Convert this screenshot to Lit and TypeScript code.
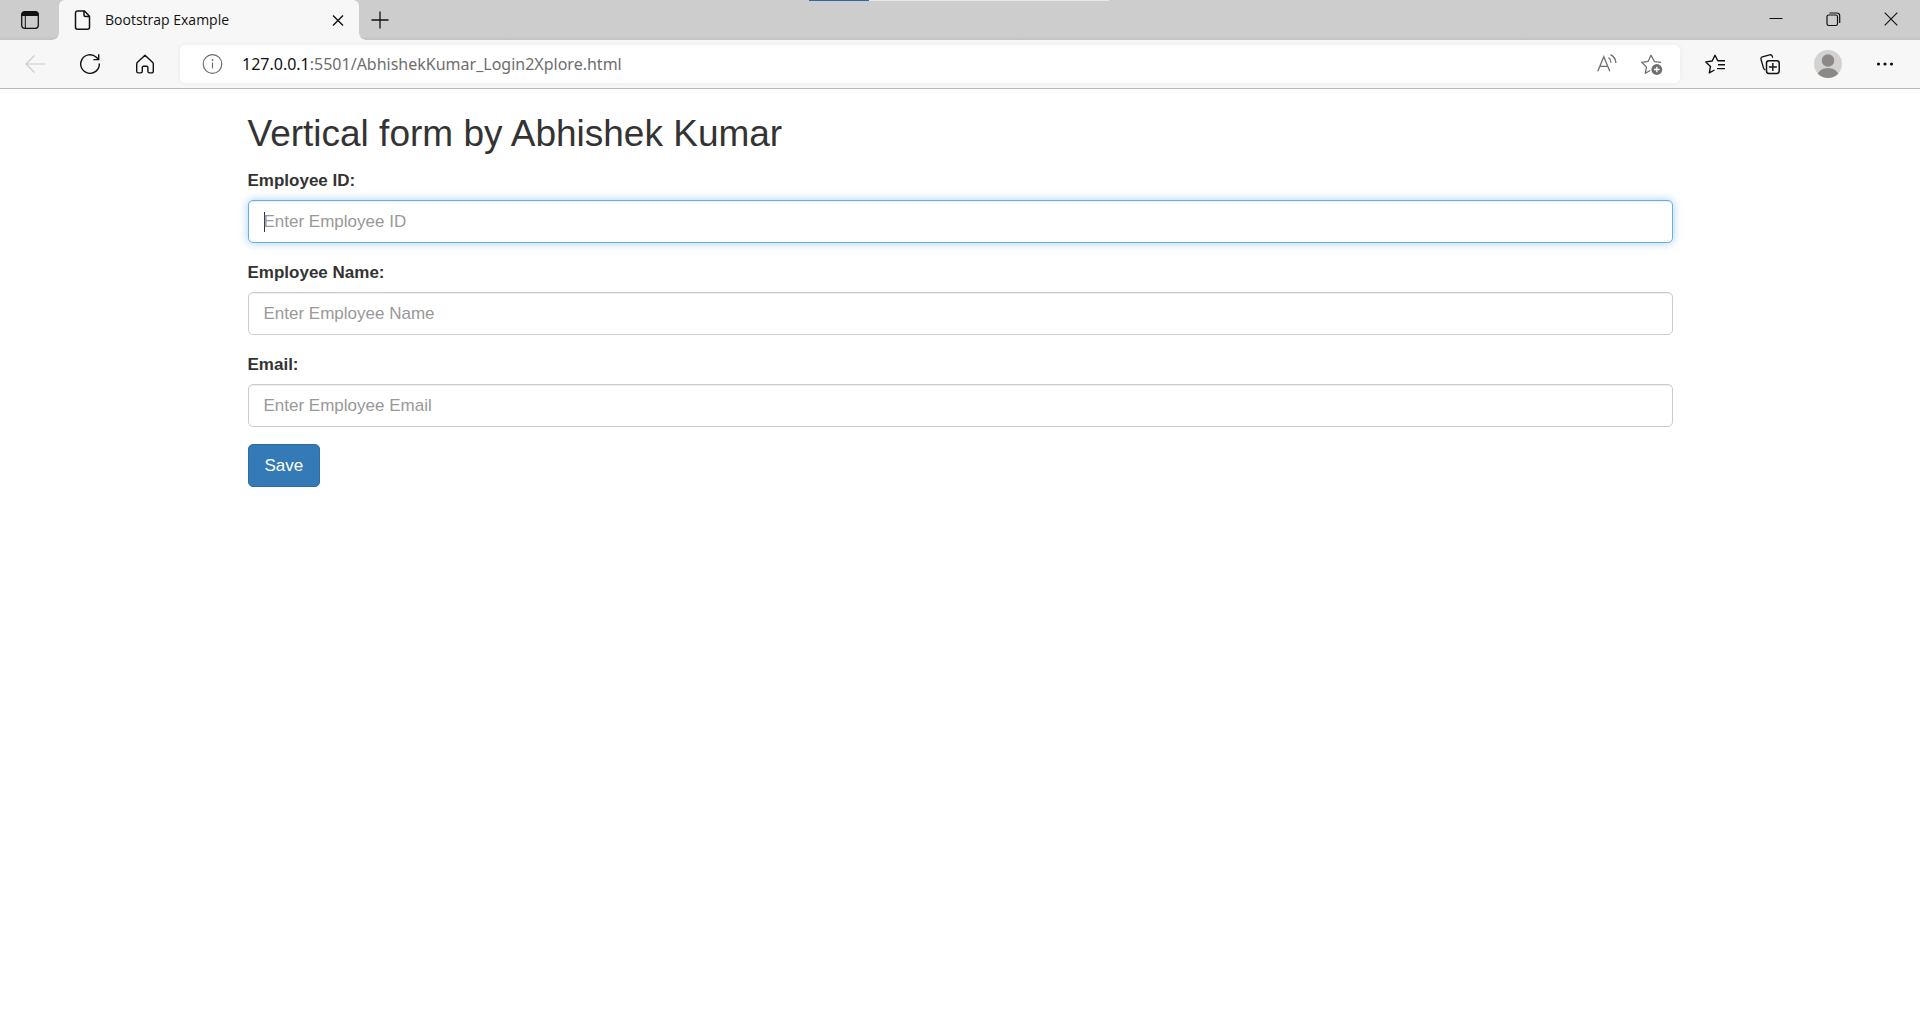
import { LitElement, html, svg, css } from "lit";
import { customElement, property, state } from "lit/decorators.js";

const icons = {
  tabActions: svg`<rect x="1.700" y="1.700" width="16.600" height="16.600" rx="3" fill="none" stroke="currentColor" stroke-width="1.300"/><path d="M1.500 6V4.500a3 3 0 0 1 3-3h11a3 3 0 0 1 3 3V6z" fill="currentColor"/><path d="M5.300 6v12" stroke="currentColor" stroke-width="1"/>`,
  page: svg`<path d="M4.500 1h7l5 5.200v11a2 2 0 0 1-2 2h-10a2 2 0 0 1-2-2V3a2 2 0 0 1 2-2z M11 1.200V5a1.500 1.500 0 0 0 1.500 1.500h4" fill="none" stroke="currentColor" stroke-width="1.500" stroke-linejoin="round"/>`,
  close: svg`<path d="M5 5.500l10 10M15 5.500l-10 10" fill="none" stroke="currentColor" stroke-width="1.400"/>`,
  plus: svg`<path d="M10 1.500v17M1.500 10h17" fill="none" stroke="currentColor" stroke-width="1.300"/>`,
  back: svg`<path d="M20 10H1M9.500 1.500L1 10l8.500 8.500" fill="none" stroke="currentColor" stroke-width="1.200"/>`,
  refresh: svg`<path d="M19.300 9.500A9.300 9.300 0 1 1 16.300 3.200L18.700 5.500M18.700 .3V5.600H13.400" fill="none" stroke="currentColor" stroke-width="1.400"/>`,
  home: svg`<path d="M2.500 8.300L10 1.200l7.500 7.100c.5.500.8 1.100.8 1.800v7.200a1.600 1.600 0 0 1-1.600 1.600h-2.200a1.600 1.600 0 0 1-1.600-1.600v-3.800a1.200 1.200 0 0 0-1.200-1.200H8.500a1.200 1.200 0 0 0-1.200 1.200v3.800a1.600 1.600 0 0 1-1.600 1.600H3.300a1.600 1.600 0 0 1-1.600-1.600v-7.200c0-.7.300-1.300.8-1.800z" fill="none" stroke="currentColor" stroke-width="1.400" stroke-linejoin="round"/>`,
  info: svg`<circle cx="10.500" cy="10" r="9.300" fill="none" stroke="currentColor" stroke-width="1.200"/><path d="M10.500 8.500v6" stroke="currentColor" stroke-width="1.200"/><circle cx="10.500" cy="6" r=".9" fill="currentColor"/>`,
  readAloud: svg`<path d="M.8 17.300L6.800 2.700l6 14.600M2.800 12.300h8M11.500 3.500c1.600 1.100 2.500 2.800 2.500 5.200M13.500.6c3.300 1.700 5.200 4.400 5.400 8.400" fill="none" stroke="currentColor" stroke-width="1.300"/>`,
  starAdd: svg`<path d="M20 8.300l-6.500-.7L10 1.200 7.200 7.300l-6.500 1 4.800 4.800-1.200 6.200 5-2.800" fill="none" stroke="currentColor" stroke-width="1.300" stroke-linejoin="round"/><circle cx="15.800" cy="15.500" r="5.400" fill="currentColor"/><path d="M15.800 12.700v5.600M13 15.500h5.600" stroke="#fff" stroke-width="1.300"/>`,
  favorites: svg`<path d="M14 6.800H12.800L10 1.200 7.200 7 .8 7.900l4.700 4.500-1.200 6.400 5.200-2.800M12.500 6.800H20M13 10.700h7M12 14.600h8" fill="none" stroke="currentColor" stroke-width="1.400" stroke-linejoin="round"/>`,
  collections: svg`<path d="M5.300 15.800a3 3 0 0 1-1.700-1.600L1 5.500a2 2 0 0 1 1.300-2.600L9.600.9a2.200 2.200 0 0 1 2.700 1.500l.4 1.300" fill="none" stroke="currentColor" stroke-width="1.300"/><rect x="6.500" y="6.700" width="12.700" height="12.700" rx="2.400" fill="none" stroke="currentColor" stroke-width="1.500"/><path d="M12.850 9v8M8.850 13h8" stroke="currentColor" stroke-width="1.400"/>`,
  more: svg`<circle cx="2.500" cy="10" r="1.600" fill="currentColor"/><circle cx="9" cy="10" r="1.600" fill="currentColor"/><circle cx="15.500" cy="10" r="1.600" fill="currentColor"/>`,
  minimize: svg`<path d="M4.500 9.500h13" stroke="currentColor" stroke-width="1"/>`,
  restore: svg`<rect x="4" y="6" width="10.500" height="10.500" rx="1.700" fill="none" stroke="currentColor" stroke-width="1.200"/><path d="M6.500 4H14a2.700 2.700 0 0 1 2.700 2.700V14" fill="none" stroke="currentColor" stroke-width="1.200"/>`,
  closeWindow: svg`<path d="M3.700 3.700l12.600 12.600M16.300 3.700L3.700 16.300" stroke="currentColor" stroke-width="1.100"/>`,
};

type IconName = keyof typeof icons;

@customElement("line-icon")
class LineIcon extends LitElement {
  static styles = css`
    :host { display: block; width: 20px; height: 20px; }
    .glyph { display: block; width: 20px; height: 20px; overflow: visible; }
  `;
  @property() name: IconName = "page";
  render() {
    return html`<svg class="glyph" viewBox="0 0 20 20" aria-hidden="true">${icons[this.name]}</svg>`;
  }
}

@customElement("browser-chrome")
class BrowserChrome extends LitElement {
  static styles = css`
    :host { display: block; font-family: "Open Sans", "Noto Sans", sans-serif; color: #111; }
    button { appearance: none; border: 0; margin: 0; padding: 0; background: none; color: inherit; display: flex; align-items: center; justify-content: center; flex: none; }
    .strip { position: relative; display: flex; height: 40px; background: linear-gradient(#cdcdcd 36px, #c2c2c2 40px); }
    .actions { width: 59px; }
    .tab { position: relative; width: 300px; display: flex; align-items: center; background: #f7f7f7; border-radius: 6px 6px 0 0; padding: 0 5px 0 14px; gap: 12px; box-sizing: border-box; }
    .tab::before, .tab::after { content: ""; position: absolute; bottom: 0; width: 6px; height: 6px; }
    .tab::before { left: -6px; background: radial-gradient(circle at 0 0, transparent 5px, #f7f7f7 6px); }
    .tab::after { right: -6px; background: radial-gradient(circle at 100% 0, transparent 5px, #f7f7f7 6px); }
    .title { flex: 1; font-size: 14px; line-height: 20px; white-space: nowrap; }
    .tab-close { width: 32px; height: 32px; }
    .new-tab { width: 42px; }
    .controls { margin-left: auto; display: flex; }
    .control { width: 58px; height: 38px; }
    .progress { position: absolute; top: 0; left: 50%; width: 300px; height: 1px; margin-left: -151px; background: linear-gradient(90deg, #2a6aa8 60px, #e8e8e8 60px); }
    .toolbar { display: flex; align-items: center; gap: 15px; height: 48px; padding: 0 14px 0 15px; background: #f7f7f7; border-bottom: 1px solid #b8b8b8; }
    .tool { width: 40px; height: 40px; }
    .tool:disabled { color: #ccc; }
    .profile { width: 46px; }
    .avatar { display: block; width: 28px; height: 28px; }
    .address { flex: 1; min-width: 0; display: flex; align-items: center; gap: 4px; height: 38px; box-sizing: border-box; padding: 0 9px 0 22px; background: #fff; border-radius: 5px; box-shadow: 0 0 4px #e8e8e8; color: #6e6e6e; }
    .url { flex: 1; min-width: 0; padding-left: 16px; font-family: "Noto Sans", "Open Sans", sans-serif; font-size: 16px; line-height: 24px; white-space: nowrap; overflow: hidden; }
    .host { color: #111; }
  `;
  render() {
    return html`
      <div class="strip">
        <button class="actions" aria-label="Tab actions"><line-icon name="tabActions"></line-icon></button>
        <div class="tab">
          <line-icon name="page"></line-icon>
          <span class="title">Bootstrap Example</span>
          <button class="tab-close" aria-label="Close tab"><line-icon name="close"></line-icon></button>
        </div>
        <button class="new-tab" aria-label="New tab"><line-icon name="plus"></line-icon></button>
        <div class="progress"></div>
        <div class="controls">
          <button class="control" aria-label="Minimize"><line-icon name="minimize"></line-icon></button>
          <button class="control" aria-label="Restore"><line-icon name="restore"></line-icon></button>
          <button class="control" aria-label="Close"><line-icon name="closeWindow"></line-icon></button>
        </div>
      </div>
      <div class="toolbar">
        <button class="tool" disabled aria-label="Back"><line-icon name="back"></line-icon></button>
        <button class="tool" aria-label="Refresh"><line-icon name="refresh"></line-icon></button>
        <button class="tool" aria-label="Home"><line-icon name="home"></line-icon></button>
        <div class="address">
          <line-icon name="info"></line-icon>
          <span class="url"><span class="host">127.0.0.1</span>:5501/AbhishekKumar_Login2Xplore.html</span>
          <button class="tool" aria-label="Read aloud"><line-icon name="readAloud"></line-icon></button>
          <button class="tool" aria-label="Add to favorites"><line-icon name="starAdd"></line-icon></button>
        </div>
        <button class="tool" aria-label="Favorites"><line-icon name="favorites"></line-icon></button>
        <button class="tool" aria-label="Collections"><line-icon name="collections"></line-icon></button>
        <button class="tool profile" aria-label="Profile">
          <svg class="avatar" viewBox="0 0 28 28" aria-hidden="true">
            <defs><clipPath id="disc"><circle cx="14" cy="14" r="14" /></clipPath></defs>
            <circle cx="14" cy="14" r="14" fill="#d4d2d0" />
            <g clip-path="url(#disc)" fill="#8b8886"><circle cx="14" cy="10.500" r="6.200" /><ellipse cx="14" cy="26" rx="10.500" ry="8" /></g>
          </svg>
        </button>
        <button class="tool" aria-label="Settings and more"><line-icon name="more"></line-icon></button>
      </div>
    `;
  }
}

interface Field { id: string; label: string; placeholder: string; type: string; }

const fields: Field[] = [
  { id: "empid", label: "Employee ID:", placeholder: "Enter Employee ID", type: "text" },
  { id: "empname", label: "Employee Name:", placeholder: "Enter Employee Name", type: "text" },
  { id: "email", label: "Email:", placeholder: "Enter Employee Email", type: "email" },
];

@customElement("employee-form")
class EmployeeForm extends LitElement {
  static styles = css`
    :host { display: block; font-family: "Liberation Sans", Arial, sans-serif; font-size: 17px; line-height: 25px; color: #333; }
    .container { max-width: 1425px; margin: 0 auto; padding: 24px 16px 0; }
    .heading { margin: 0 0 14px; font-size: 37px; line-height: 41px; font-weight: 400; }
    .group { margin-bottom: 17px; }
    .label { display: block; margin-bottom: 7px; font-weight: 700; }
    .input { display: block; box-sizing: border-box; width: 100%; height: 43px; margin: 0; padding: 7px 15px; border: 1px solid #ccc; border-radius: 5px; background: #fff; box-shadow: inset 0 1px 1px rgba(0, 0, 0, 0.075); font: inherit; color: #555; outline: 0; }
    .input::placeholder { color: #999; opacity: 1; }
    .input.active { border-color: #66afe9; box-shadow: inset 0 1px 1px rgba(0, 0, 0, 0.075), 0 0 10px rgba(102, 175, 233, 0.6); }
    .input.active:placeholder-shown { caret-color: transparent; background: linear-gradient(#333, #333) 15px 50% / 1px 20px no-repeat #fff; }
    .save { appearance: none; height: 43px; margin: 0; padding: 7px 16px; border: 1px solid #2e6da4; border-radius: 5px; background: #337ab7; color: #fff; font: inherit; display: block; }
  `;
  @state() private active = "empid";
  firstUpdated() {
    this.renderRoot.querySelector<HTMLInputElement>("#empid")?.focus();
  }
  render() {
    return html`
      <main class="container">
        <h2 class="heading">Vertical form by Abhishek Kumar</h2>
        <form @submit=${(e: Event) => e.preventDefault()}>
          ${fields.map((f) => html`
            <div class="group">
              <label class="label" for=${f.id}>${f.label}</label>
              <input class="input ${this.active === f.id ? "active" : ""}" id=${f.id} name=${f.id} type=${f.type}
                placeholder=${f.placeholder} @focus=${() => { this.active = f.id; }} />
            </div>`)}
          <button class="save" type="submit">Save</button>
        </form>
      </main>
    `;
  }
}

@customElement("app-root")
class AppRoot extends LitElement {
  static styles = css`
    :host { display: block; min-height: 100vh; background: #fff; }
  `;
  render() {
    return html`<browser-chrome></browser-chrome><employee-form></employee-form>`;
  }
}
